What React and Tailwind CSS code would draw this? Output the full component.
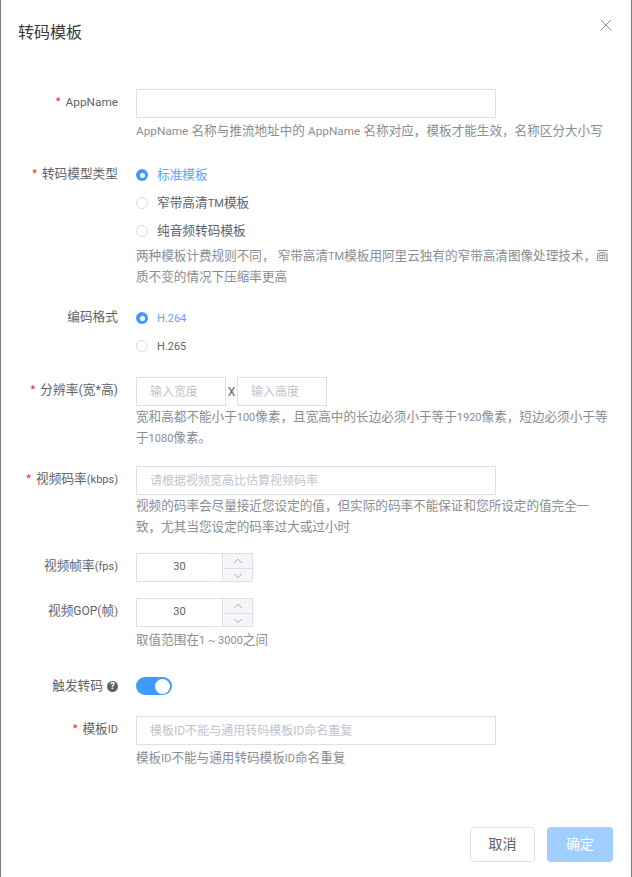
import React from 'react';
import { X, ChevronUp, ChevronDown } from 'lucide-react';

// latin runs and digits sit smaller than the CJK text in this form
const Sm = ({ children }) => <span className="text-[11px] leading-none">{children}</span>;
const AppName = () => <span className="text-[11.8px] leading-none">AppName</span>;

const Label = ({ required, children }) => (
  <div className="w-[117px] shrink-0 text-right text-[12.7px] leading-[26px] text-[#5f6368] whitespace-nowrap">
    {required && <span className="mr-[5px] align-[1px] text-[11px] leading-none text-[#f5222d]">*</span>}
    {children}
  </div>
);

const Hint = ({ children }) => (
  <p className="w-[474px] text-[12.6px] leading-[21px] text-[#8a8d92]">{children}</p>
);

const TextInput = ({ placeholder, className = 'w-[360px]' }) => (
  <input
    placeholder={placeholder}
    className={`${className} block h-[29px] border border-[#dcdfe6] bg-white px-[13px] text-[12px] outline-none placeholder:text-[#c0c4cc]`}
  />
);

const Radio = ({ checked, children }) => (
  <div className="flex h-7 items-center gap-[9px]">
    {checked ? (
      <span className="flex h-3 w-3 items-center justify-center rounded-full bg-[#3f9bff]">
        <span className="h-[5px] w-[5px] rounded-full bg-white" />
      </span>
    ) : (
      <span className="h-3 w-3 rounded-full border border-[#d8dae2] bg-white" />
    )}
    <span className={`text-[12.7px] ${checked ? 'text-[#5aa5ff]' : 'text-[#606266]'}`}>{children}</span>
  </div>
);

const NumberInput = () => (
  <div className="flex h-[29px] w-[117px] border border-[#dcdfe6]">
    <div className="flex flex-1 items-center justify-center text-[11px] text-[#606266]">30</div>
    <div className="flex w-[30px] flex-col border-l border-[#dcdfe6] bg-[#f5f6fa] text-[#a8abb2]">
      <div className="flex flex-1 items-center justify-center border-b border-[#dcdfe6]">
        <ChevronUp size={14} strokeWidth={1.7} />
      </div>
      <div className="flex flex-1 items-center justify-center">
        <ChevronDown size={14} strokeWidth={1.7} />
      </div>
    </div>
  </div>
);

export default function App() {
  return (
    <div className="flex h-[877px] w-[632px] flex-col border-x border-x-[#7b7b7b] bg-white font-['Roboto','Noto_Sans_CJK_SC',sans-serif]">
      {/* Header */}
      <div className="flex h-[89px] items-start justify-between pl-[17px] pr-[15px]">
        <h2 className="mt-[21px] text-[16px] leading-6 text-[#3a3a3a]">转码模板</h2>
        <X size={20} strokeWidth={1.2} className="mt-[15px] text-[#8a8d92]" />
      </div>

      {/* Form */}
      <div className="flex flex-1 flex-col">
        <div className="flex gap-[18px]">
          <Label required><AppName /></Label>
          <div>
            <TextInput />
            <div className="mt-[2px]">
              <Hint><AppName /> 名称与推流地址中的 <AppName /> 名称对应，模板才能生效，名称区分大小写</Hint>
            </div>
          </div>
        </div>

        <div className="mt-[20px] flex gap-[18px]">
          <Label required>转码模型类型</Label>
          <div>
            <Radio checked>标准模板</Radio>
            <Radio>窄带高清<Sm>TM</Sm>模板</Radio>
            <Radio>纯音频转码模板</Radio>
            <Hint>两种模板计费规则不同， 窄带高清<Sm>TM</Sm>模板用阿里云独有的窄带高清图像处理技术，画质不变的情况下压缩率更高</Hint>
          </div>
        </div>

        <div className="mt-[17px] flex gap-[18px]">
          <Label>编码格式</Label>
          <div>
            <Radio checked><Sm>H.264</Sm></Radio>
            <Radio><Sm>H.265</Sm></Radio>
          </div>
        </div>

        <div className="mt-[17px] flex gap-[18px]">
          <Label required>分辨率(宽*高)</Label>
          <div>
            <div className="flex items-center">
              <TextInput placeholder="输入宽度" className="w-[90px]" />
              <span className="w-[11px] text-center text-[12px] text-[#606266]">X</span>
              <TextInput placeholder="输入高度" className="w-[90px]" />
            </div>
            <Hint>宽和高都不能小于<Sm>100</Sm>像素，且宽高中的长边必须小于等于<Sm>1920</Sm>像素，短边必须小于等于<Sm>1080</Sm>像素。</Hint>
          </div>
        </div>

        <div className="mt-[18px] flex gap-[18px]">
          <Label required>视频码率<Sm>(kbps)</Sm></Label>
          <div>
            <TextInput placeholder="请根据视频宽高比估算视频码率" />
            <Hint>视频的码率会尽量接近您设定的值，但实际的码率不能保证和您所设定的值完全一致，尤其当您设定的码率过大或过小时</Hint>
          </div>
        </div>

        <div className="mt-[16px] flex gap-[18px]">
          <Label>视频帧率<Sm>(fps)</Sm></Label>
          <NumberInput />
        </div>

        <div className="mt-[16px] flex gap-[18px]">
          <Label>视频<span className="text-[12px] leading-none">GOP(</span>帧<Sm>)</Sm></Label>
          <div>
            <NumberInput />
            <div className="mt-[2px]">
              <Hint>取值范围在<Sm>1 ~ 3000</Sm>之间</Hint>
            </div>
          </div>
        </div>

        <div className="mt-[24px] flex items-center gap-[18px]">
          <div className="flex w-[117px] shrink-0 items-center justify-end gap-[4px] text-[12.7px] leading-6 text-[#5f6368]">
            触发转码
            <span className="flex h-[11px] w-[11px] items-center justify-center rounded-full bg-[#5f6368] text-[9px] font-bold leading-none text-white">?</span>
          </div>
          <div className="flex h-[18px] w-9 items-center justify-end rounded-full bg-[#3f9bff] pr-[2px]">
            <span className="h-[15px] w-[15px] rounded-full bg-white" />
          </div>
        </div>

        <div className="mt-[18px] flex gap-[18px]">
          <Label required>模板<Sm>ID</Sm></Label>
          <div>
            <TextInput placeholder="模板ID不能与通用转码模板ID命名重复" />
            <div className="mt-[2px]">
              <Hint>模板<Sm>ID</Sm>不能与通用转码模板<Sm>ID</Sm>命名重复</Hint>
            </div>
          </div>
        </div>
      </div>

      {/* Footer */}
      <div className="flex justify-end gap-3 pb-[15px] pr-[18px]">
        <button className="h-[35px] w-[65px] rounded border border-[#dcdfe6] bg-white text-[14px] text-[#606266]">取消</button>
        <button className="h-[35px] w-[66px] rounded bg-[#a0cfff] text-[14px] text-white">确定</button>
      </div>
    </div>
  );
}
